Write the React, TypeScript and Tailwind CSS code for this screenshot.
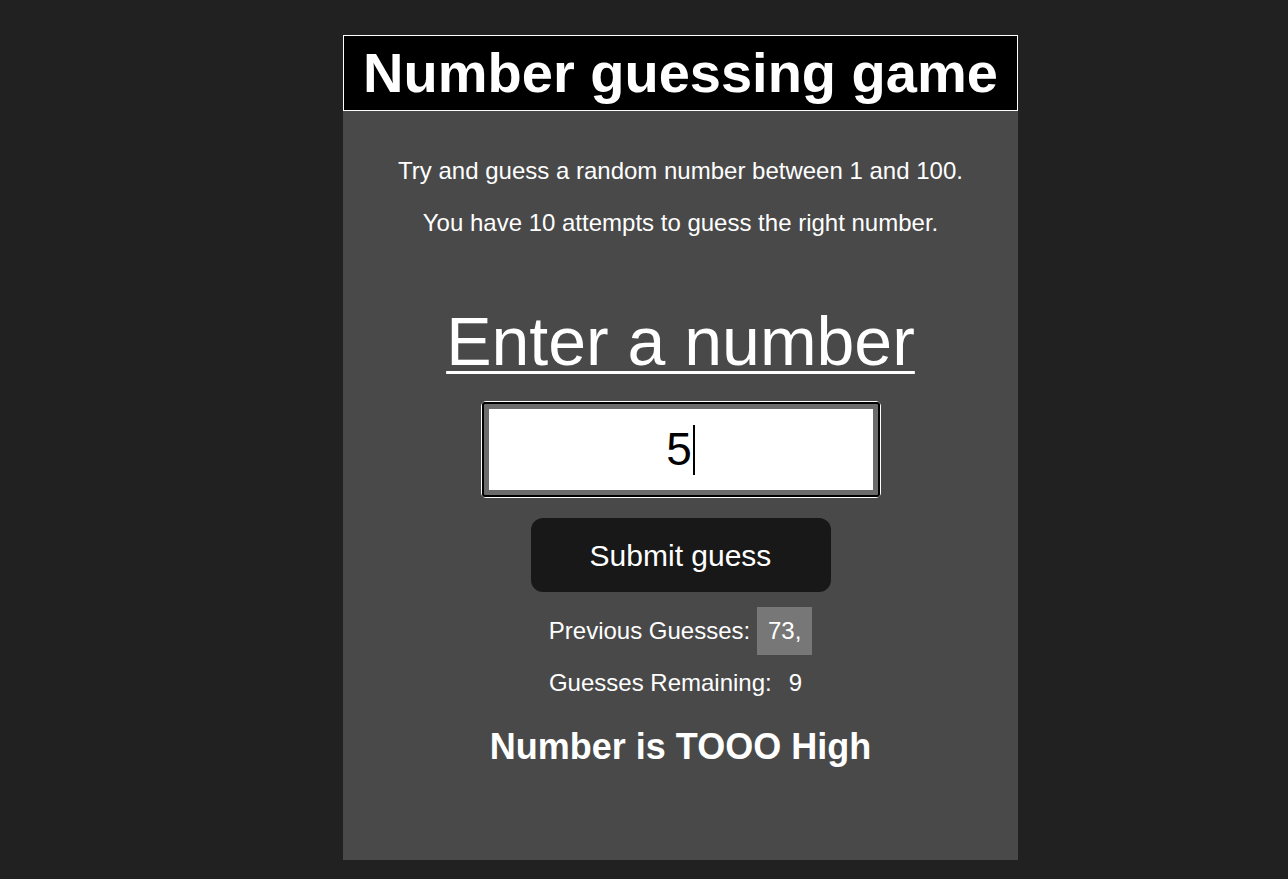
export default function App() {
  return (
    <div className="min-h-screen bg-[#212121] pt-[35px] pb-[19px] font-['Liberation_Sans',Arial,sans-serif] text-white">
      <div className="ml-[343px] flex h-[825px] w-[675px] flex-col items-center bg-[#494949] text-center">
        {/* Header */}
        <h1 className="w-full border border-white bg-black py-[5px] text-[56px] font-bold leading-[64px]">
          Number guessing game
        </h1>

        <p className="mt-[46px] text-[24px] leading-[28px]">Try and guess a random number between 1 and 100.</p>
        <p className="mt-[24px] text-[24px] leading-[28px]">You have 10 attempts to guess the right number.</p>

        <h2 className="mt-[66px] text-[68px] leading-[76px] underline decoration-[3px] underline-offset-[6px]">
          Enter a number
        </h2>

        {/* Input */}
        <div className="mt-[22px] w-[400px] rounded-[5px] border border-white">
          <div className="rounded-[3px] border-2 border-black bg-[#6b6b6b] p-[5px]">
            <div className="flex h-[81px] items-center justify-center bg-white text-[46px] text-black">
              <span>5</span>
              <span className="ml-[1px] h-[50px] w-[2px] bg-black" />
            </div>
          </div>
        </div>

        <button className="mt-[20px] h-[74px] w-[300px] rounded-[12px] bg-[#181818] text-[30px] text-white">
          Submit guess
        </button>

        <div className="mt-[15px] flex items-center text-[24px]">
          <span>Previous Guesses:</span>
          <span className="ml-[7px] flex h-[48px] w-[55px] items-center justify-center bg-[#777777]">73,</span>
        </div>

        <div className="mt-[14px] flex items-center pr-[10px] text-[24px] leading-[28px]">
          <span>Guesses Remaining:</span>
          <span className="ml-[17px]">9</span>
        </div>

        <h3 className="mt-[28px] text-[36px] font-bold leading-[44px]">Number is TOOO High</h3>
      </div>
    </div>
  );
}
